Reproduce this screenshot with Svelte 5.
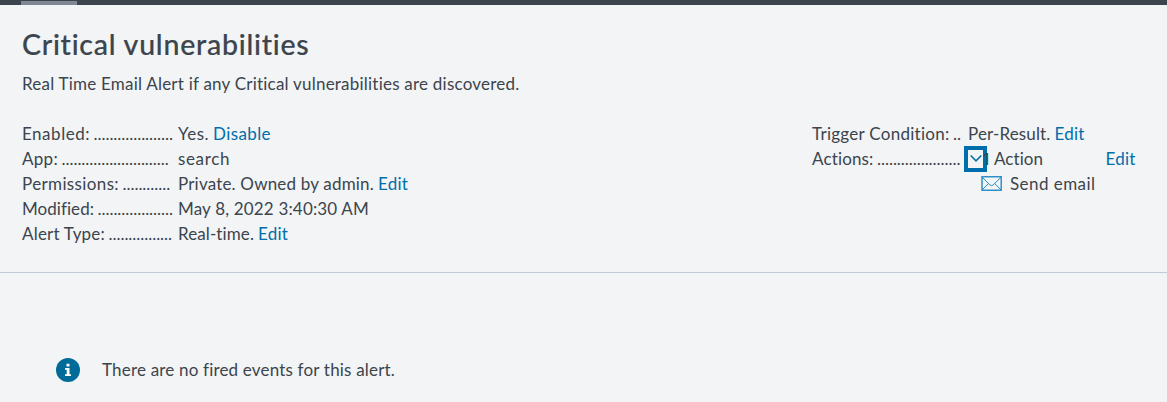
<script>
  const details = [
    { label: 'Enabled:', lw: 68, dots: 20, value: 'Yes.', vw: 31, link: 'Disable', kw: 58 },
    { label: 'App:', lw: 36, dots: 27, value: 'search', vw: 52 },
    { label: 'Permissions:', lw: 97, dots: 12, value: 'Private. Owned by admin.', vw: 196, link: 'Edit', kw: 30 },
    { label: 'Modified:', lw: 72, dots: 19, value: 'May 8, 2022 3:40:30 AM', vw: 191 },
    { label: 'Alert Type:', lw: 83, dots: 16, value: 'Real-time.', vw: 76, link: 'Edit', kw: 30 }
  ];

  // Spreads the letters of a text so that it fills the given width.
  function track(node, width) {
    const apply = () => {
      node.style.letterSpacing = '0px';
      const gap = (width - node.getBoundingClientRect().width) / node.textContent.length;
      node.style.letterSpacing = `${gap}px`;
    };
    apply();
    document.fonts?.ready.then(apply);
  }
</script>

{#snippet term(label, width, dots)}
  <dt><span use:track={width}>{label}</span><span class="dots" use:track={dots * 3.97}>{'.'.repeat(dots)}</span></dt>
{/snippet}

<div class="page">
  <div class="nav"><div class="active"></div></div>
  <header>
    <h1><span use:track={287.5}>Critical vulnerabilities</span></h1>
    <p><span use:track={497.5}>Real Time Email Alert if any Critical vulnerabilities are discovered.</span></p>
    <div class="columns">
      <dl>
        {#each details as d}
          <div class="row">
            {@render term(d.label, d.lw, d.dots)}
            <dd><span use:track={d.vw}>{d.value}</span>{#if d.link}<a href="#edit" use:track={d.kw}>{d.link}</a>{/if}</dd>
          </div>
        {/each}
      </dl>
      <dl class="right">
        <div class="row">
          {@render term('Trigger Condition:', 137.5, 2)}
          <dd><span use:track={82.5}>Per-Result.</span><a href="#edit" use:track={30}>Edit</a></dd>
        </div>
        <div class="row">
          {@render term('Actions:', 61.5, 21)}
          <dd class="action">
            <span class="count"><span class="one">1</span><span use:track={49}>Action</span></span>
            <a href="#edit" class="far" use:track={30}>Edit</a>
            <button aria-label="Collapse">
              <svg width="12" height="8" viewBox="0 0 12 8"><path d="M.7 .5 6 5.9 11.3 .5" /></svg>
            </button>
          </dd>
        </div>
        <div class="row email">
          <svg width="21" height="15" viewBox="0 0 21 15">
            <rect x="1" y=".75" width="19.2" height="13.5" />
            <path class="thin" d="M1.2 1.2 8.8 8.8Q10.6 10.4 12.4 8.8L20 1.2M1.2 13.9 7.6 7.4M20 13.9 13.6 7.4" />
          </svg>
          <span use:track={85.5}>Send email</span>
        </div>
      </dl>
    </div>
  </header>
  <section>
    <svg width="24" height="24" viewBox="0 0 24 24">
      <circle cx="12" cy="12" r="12" />
      <path d="M10.5 5.8h3v2.6h-3zM9 10h4.5v6.2H15V18H9v-1.8h1.7v-4.4H9z" />
    </svg>
    <span class="notice" use:track={293}>There are no fired events for this alert.</span>
  </section>
</div>

<style>
  :global(body) { margin: 0; background: #f2f4f5; }
  .page {
    height: 402px;
    overflow: hidden;
    background: #f2f4f5;
    color: #3c444d;
    font: 17px/25px Lato, sans-serif;
    font-variant-ligatures: none;
    white-space: nowrap;
  }
  .nav { height: 5px; padding-left: 21px; background: #3c444d; }
  .active { width: 56px; height: 5px; border-top: 1px solid #3c444d; box-sizing: border-box; background: #818895; }
  header { box-sizing: border-box; height: 268px; padding: 20px 22px 0; border-bottom: 1px solid #c3cbd4; }
  h1 { margin: 0; font-size: 28.5px; line-height: 38px; font-weight: 500; -webkit-text-stroke: .2px #3c444d; }
  p { margin: 8px 0 25px; }
  .columns { display: flex; justify-content: space-between; }
  dl { margin: 0; }
  .right { width: 333px; }
  .row { display: flex; height: 25px; }
  dt { display: flex; gap: 3.5px; width: 156px; }
  dd { display: flex; flex: 1; gap: 4px; margin: 0; }
  a { color: #006eaa; text-decoration: none; }
  .action { position: relative; justify-content: space-between; }
  .count { position: relative; z-index: 1; display: flex; gap: 3px; padding-left: 14px; }
  .one { width: 9px; font-family: "Open Sans", sans-serif; }
  .far { margin-right: 9.5px; }
  button {
    position: absolute;
    left: -4px;
    top: 0;
    display: flex;
    align-items: center;
    justify-content: center;
    width: 23px;
    height: 26px;
    padding: 0;
    border: 4px solid #006eaa;
    background: #f2f4f5;
  }
  svg { flex: none; display: block; }
  button path { fill: none; stroke: #006eaa; stroke-width: 1.5; }
  .email { padding-left: 169px; gap: 8px; }
  .email svg { margin-top: 5px; }
  .email rect, .email path { fill: none; stroke: #248bc4; stroke-width: 1.4; }
  .email .thin { stroke-width: 1; }
  section { display: flex; align-items: center; gap: 22px; padding: 85px 56px; }
  section circle { fill: #006b99; }
  section path { fill: #fff; }
  .notice { margin-top: -2px; }
</style>
